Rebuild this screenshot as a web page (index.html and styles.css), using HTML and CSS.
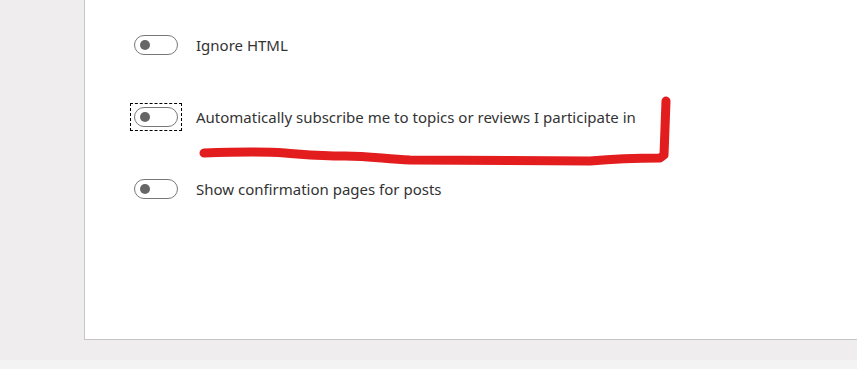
FILE: index.html
```html
<!DOCTYPE html>
<html lang="en">
<head>
  <meta charset="UTF-8" />
  <title>Preferences</title>
  <link rel="stylesheet" href="styles.css">
</head>
<body>
  <div class="page">
    <div class="panel">
      <div class="options">
        <!-- Option rows -->
        <div class="option">
          <span class="toggle-wrap"><span class="toggle"><span class="knob"></span></span></span>
          <span class="label">Ignore HTML</span>
        </div>
        <div class="option">
          <span class="toggle-wrap focused"><span class="toggle"><span class="knob"></span></span></span>
          <span class="label">Automatically subscribe me to topics or reviews I participate in</span>
        </div>
        <div class="option">
          <span class="toggle-wrap"><span class="toggle"><span class="knob"></span></span></span>
          <span class="label">Show confirmation pages for posts</span>
        </div>
      </div>

      <!-- Hand-drawn marker annotation -->
      <svg class="scribble" width="857" height="200" viewBox="0 0 857 200">
        <path d="M204,153 C230,152 258,151 285,153 S320,156 345,156 S385,159 410,160 L590,161 C612,159 640,158 660,158 L664,155 L666,101"
              fill="none" stroke="#e31c1e" stroke-width="9" stroke-linecap="round" stroke-linejoin="round"/>
      </svg>
    </div>
    <div class="footer-strip"></div>
  </div>
</body>
</html>
```

FILE: styles.css
```css
body {
  margin: 0;
  padding: 0;
  background: #efeded;
  font-family: 'Segoe UI', 'Noto Sans', 'Open Sans', sans-serif;
  color: #333;
}

.page {
  position: relative;
  height: 369px;
  overflow: hidden;
}

.panel {
  margin-left: 84px;
  height: 340px;
  box-sizing: border-box;
  background: #ffffff;
  border-left: 1px solid #c6c6c6;
  border-bottom: 1px solid #c6c6c6;
  padding: 35px 0 0 49px;
}

.options {
  display: flex;
  flex-direction: column;
  gap: 52px;
}

.option {
  display: flex;
  align-items: center;
  height: 20px;
}

.toggle-wrap {
  display: flex;
  flex-shrink: 0;
}

.toggle-wrap.focused {
  outline: 1px dashed #000;
  outline-offset: 3px;
}

.toggle {
  width: 44px;
  height: 20px;
  box-sizing: border-box;
  border: 1px solid #777;
  border-radius: 10px;
  display: flex;
  align-items: center;
  padding-left: 5px;
}

.knob {
  width: 10px;
  height: 10px;
  border-radius: 50%;
  background: #666;
}

.label {
  margin-left: 18px;
  font-size: 15px;
  line-height: 20px;
  color: #333;
}

.scribble {
  position: absolute;
  left: 0;
  top: 0;
  pointer-events: none;
}

.footer-strip {
  margin-top: 20px;
  height: 9px;
  background: #f3f3f3;
}
```
